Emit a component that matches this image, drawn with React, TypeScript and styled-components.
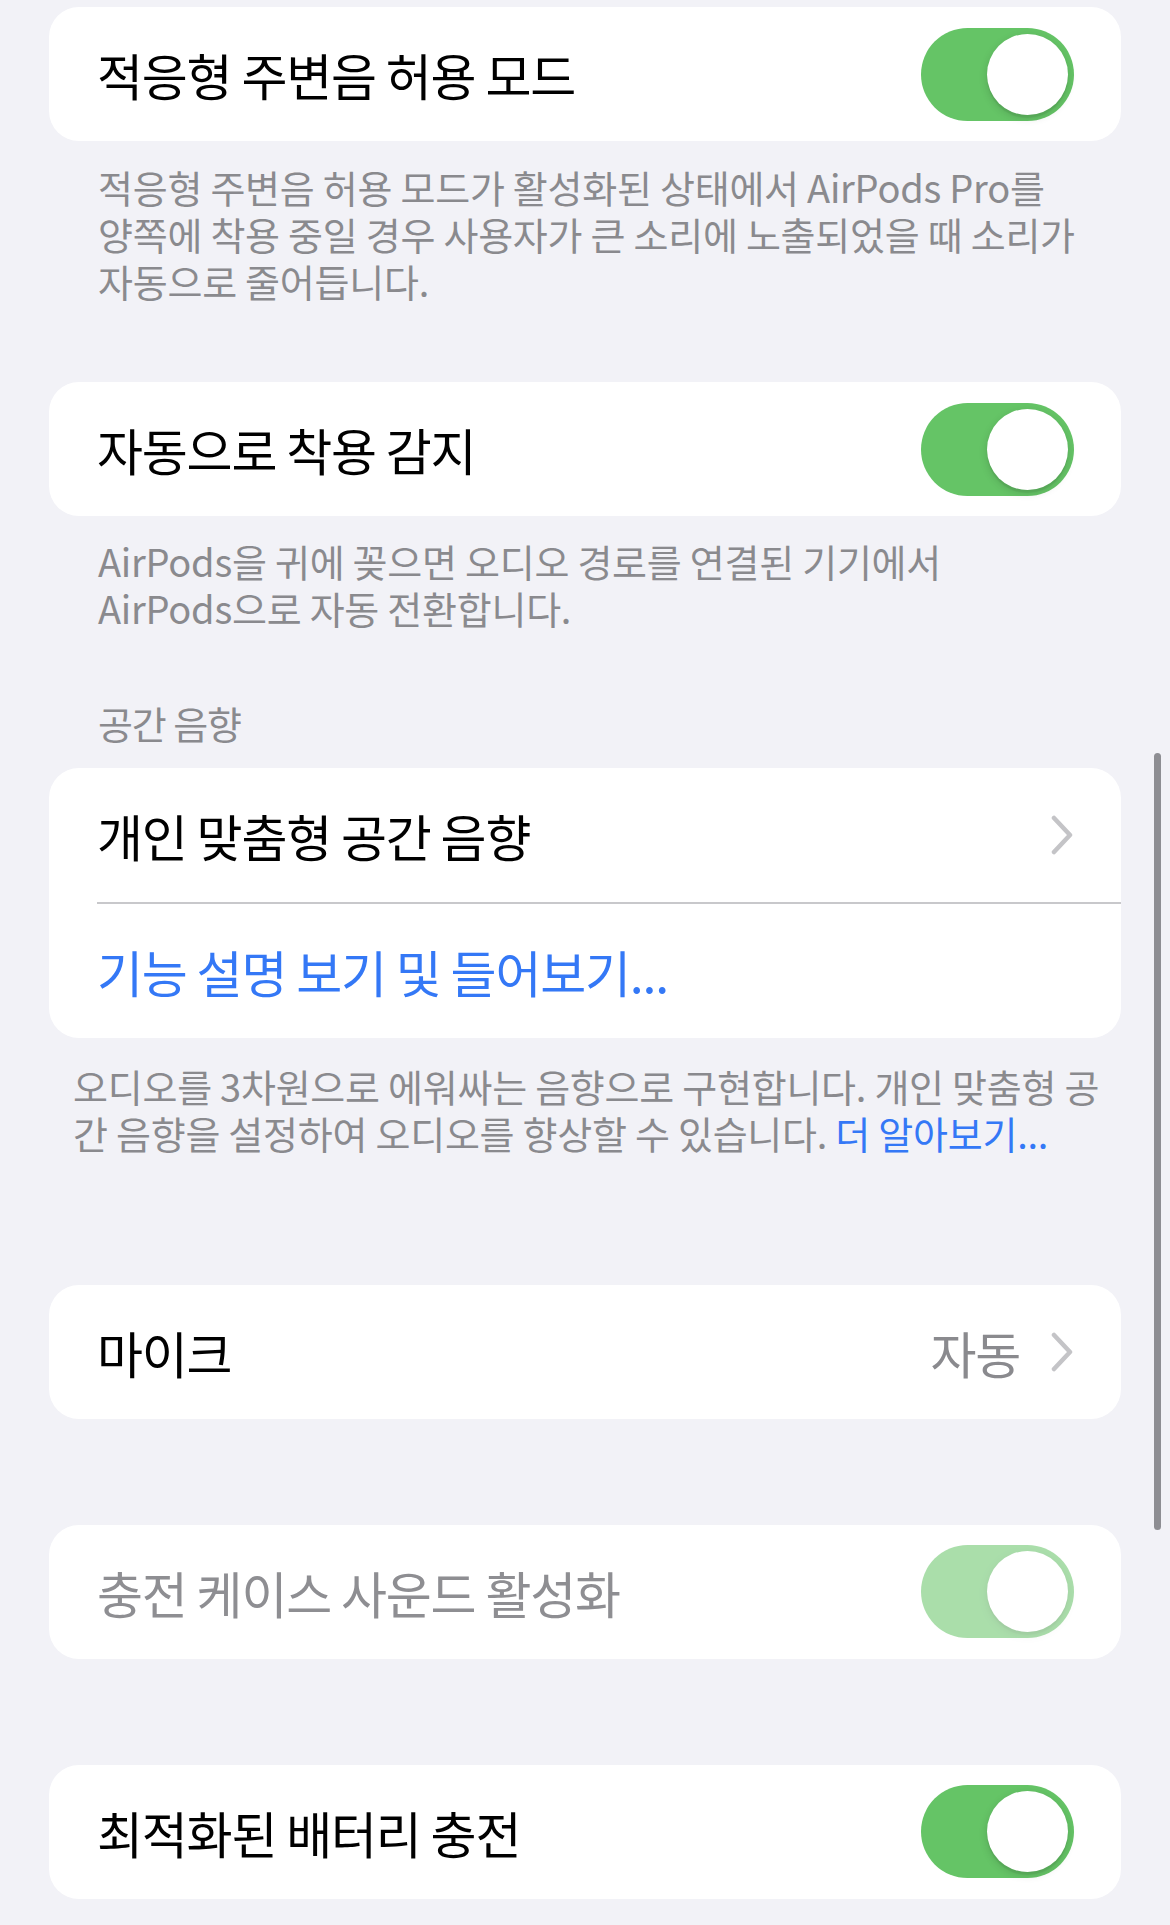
import React from "react";
import styled, { createGlobalStyle } from "styled-components";

const GlobalStyle = createGlobalStyle`
  html, body {
    margin: 0;
    padding: 0;
    background: #f2f2f7;
  }
  body {
    font-family: "Noto Sans CJK KR", "Noto Sans", sans-serif;
    -webkit-font-smoothing: antialiased;
  }
`;

const Page = styled.div`
  position: relative;
  box-sizing: border-box;
  min-height: 1925px;
  padding: 7px 49px 20px;
  background: #f2f2f7;
`;

const Card = styled.div<{ $top?: number }>`
  margin-top: ${(p) => p.$top ?? 0}px;
  background: #fff;
  border-radius: 30px;
  overflow: hidden;
`;

const Row = styled.div`
  height: 134px;
  display: flex;
  align-items: center;
  padding: 0 47px 0 48px;
  box-sizing: border-box;
`;

const Divider = styled.div`
  height: 1.5px;
  margin-left: 48px;
  background: #c8c8cb;
`;

const Label = styled.span<{ $tone?: "normal" | "muted" | "link" }>`
  flex: 1;
  font-size: 50px;
  letter-spacing: -1.2px;
  color: ${(p) =>
    p.$tone === "muted" ? "#8e8e92" : p.$tone === "link" ? "#3478f6" : "#000"};
`;

const Value = styled.span`
  font-size: 50px;
  letter-spacing: -1.2px;
  color: #8a8a8e;
  margin-right: 30px;
`;

const Footer = styled.div<{ $indent: number; $top: number }>`
  padding: ${(p) => p.$top}px 0 0 ${(p) => p.$indent}px;
  font-size: 38px;
  line-height: 47px;
  letter-spacing: -0.25px;
  color: #8a8a8e;
  white-space: nowrap;
`;

const Line = styled.div`
  height: 47px;
`;

const Header = styled.div<{ $top: number }>`
  margin-top: ${(p) => p.$top}px;
  padding-left: 49px;
  font-size: 38px;
  line-height: 47px;
  letter-spacing: -1.1px;
  color: #8a8a8e;
`;

const Link = styled.span`
  color: #3478f6;
`;

const Track = styled.div<{ $disabled?: boolean }>`
  position: relative;
  width: 153px;
  height: 93px;
  border-radius: 47px;
  background: #65c466;
  opacity: ${(p) => (p.$disabled ? 0.55 : 1)};
  flex-shrink: 0;
`;

const Knob = styled.div`
  position: absolute;
  top: 6px;
  right: 6px;
  width: 81px;
  height: 81px;
  border-radius: 50%;
  background: #fff;
  box-shadow: 0 3px 8px rgba(0, 0, 0, 0.15), 0 3px 1px rgba(0, 0, 0, 0.06);
`;

const ScrollIndicator = styled.div`
  position: absolute;
  top: 753px;
  right: 9px;
  width: 7px;
  height: 777px;
  border-radius: 4px;
  background: #8e8e93;
`;

const Toggle = ({ disabled }: { disabled?: boolean }) => (
  <Track $disabled={disabled}>
    <Knob />
  </Track>
);

const Chevron = () => (
  <svg width="24" height="40" viewBox="0 0 24 40" fill="none">
    <path
      d="M4 3 L20 20 L4 37"
      stroke="#c4c4c7"
      strokeWidth="4.5"
      strokeLinecap="round"
      strokeLinejoin="round"
    />
  </svg>
);

export default function App() {
  return (
    <>
      <GlobalStyle />
      <Page>
        <Card>
          <Row>
            <Label>적응형 주변음 허용 모드</Label>
            <Toggle />
          </Row>
        </Card>
        <Footer $indent={49} $top={22}>
          <Line>적응형 주변음 허용 모드가 활성화된 상태에서 AirPods Pro를</Line>
          <Line>양쪽에 착용 중일 경우 사용자가 큰 소리에 노출되었을 때 소리가</Line>
          <Line>자동으로 줄어듭니다.</Line>
        </Footer>

        <Card $top={78}>
          <Row>
            <Label>자동으로 착용 감지</Label>
            <Toggle />
          </Row>
        </Card>
        <Footer $indent={49} $top={21}>
          <Line>AirPods을 귀에 꽂으면 오디오 경로를 연결된 기기에서</Line>
          <Line>AirPods으로 자동 전환합니다.</Line>
        </Footer>

        <Header $top={68}>공간 음향</Header>
        <Card $top={22}>
          <Row>
            <Label>개인 맞춤형 공간 음향</Label>
            <Chevron />
          </Row>
          <Divider />
          <Row>
            <Label $tone="link">기능 설명 보기 및 들어보기...</Label>
          </Row>
        </Card>
        <Footer $indent={24} $top={24}>
          <Line>오디오를 3차원으로 에워싸는 음향으로 구현합니다. 개인 맞춤형 공</Line>
          <Line>
            간 음향을 설정하여 오디오를 향상할 수 있습니다.{" "}
            <Link>더 알아보기...</Link>
          </Line>
        </Footer>

        <Card $top={129}>
          <Row>
            <Label>마이크</Label>
            <Value>자동</Value>
            <Chevron />
          </Row>
        </Card>

        <Card $top={106}>
          <Row>
            <Label $tone="muted">충전 케이스 사운드 활성화</Label>
            <Toggle disabled />
          </Row>
        </Card>

        <Card $top={106}>
          <Row>
            <Label>최적화된 배터리 충전</Label>
            <Toggle />
          </Row>
        </Card>

        <ScrollIndicator />
      </Page>
    </>
  );
}
